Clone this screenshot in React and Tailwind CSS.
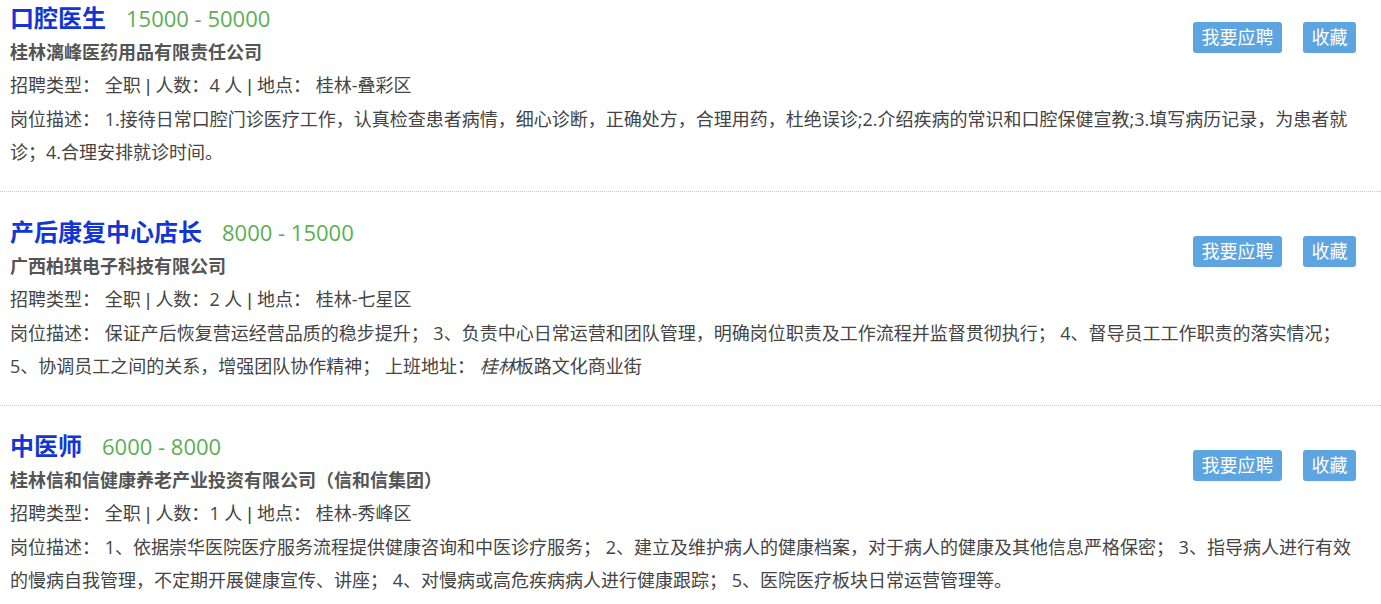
import React from 'react';

const jobs = [
  {
    title: '口腔医生',
    salary: '15000 - 50000',
    company: '桂林漓峰医药用品有限责任公司',
    count: 4,
    place: '桂林-叠彩区',
    desc: <>1.接待日常口腔门诊医疗工作，认真检查患者病情，细心诊断，正确处方，合理用药，杜绝误诊;2.介绍疾病的常识和口腔保健宣教;3.填写病历记录，为患者就诊；4.合理安排就诊时间。</>,
  },
  {
    title: '产后康复中心店长',
    salary: '8000 - 15000',
    company: '广西柏琪电子科技有限公司',
    count: 2,
    place: '桂林-七星区',
    desc: (
      <>
        保证产后恢复营运经营品质的稳步提升； 3、负责中心日常运营和团队管理，明确岗位职责及工作流程并监督贯彻执行； 4、督导员工工作职责的落实情况； 5、协调员工之间的关系，增强团队协作精神； 上班地址： <i>桂林</i>板路文化商业街
      </>
    ),
  },
  {
    title: '中医师',
    salary: '6000 - 8000',
    company: '桂林信和信健康养老产业投资有限公司（信和信集团）',
    count: 1,
    place: '桂林-秀峰区',
    desc: <>1、依据崇华医院医疗服务流程提供健康咨询和中医诊疗服务； 2、建立及维护病人的健康档案，对于病人的健康及其他信息严格保密； 3、指导病人进行有效的慢病自我管理，不定期开展健康宣传、讲座； 4、对慢病或高危疾病病人进行健康跟踪； 5、医院医疗板块日常运营管理等。</>,
  },
];

const Pipe = () => <span className="font-['Liberation_Sans',sans-serif]"> | </span>;

const JobItem = ({ job }) => (
  <div className="border-b border-dotted border-[#cccccc] pt-[22px] pb-[22px] first:pt-0">
    <div className="pl-[10px] pr-[25px]">
      <div className="float-right mt-[22px] flex gap-[21px]">
        <button className="h-[31px] w-[89px] rounded-[3px] bg-[#5ca5e0] text-[18px] leading-[31px] text-white">
          我要应聘
        </button>
        <button className="h-[31px] w-[53px] rounded-[3px] bg-[#5ca5e0] text-[18px] leading-[31px] text-white">
          收藏
        </button>
      </div>
      <div className="flex h-[36px] items-center">
        <span className="text-[24px] font-bold text-[#1236d6]">{job.title}</span>
        <span className="ml-[20px] text-[22px] text-[#5cae52]">{job.salary}</span>
      </div>
      <div className="text-[18px] font-bold leading-[33px] text-[#555555]">{job.company}</div>
      <div className="text-[18px] leading-[33px] text-[#444444]">
        招聘类型： 全职<Pipe />人数：{job.count} 人<Pipe />地点： {job.place}
      </div>
      <div className="text-[18px] leading-[33px] text-[#444444]">
        岗位描述： {job.desc}
      </div>
    </div>
  </div>
);

export default function App() {
  return (
    <div
      className="w-[1381px] bg-white"
      style={{ fontFamily: '"Open Sans", "Noto Sans CJK SC", sans-serif' }}
    >
      {jobs.map((job, i) => (
        <JobItem key={i} job={job} />
      ))}
    </div>
  );
}
